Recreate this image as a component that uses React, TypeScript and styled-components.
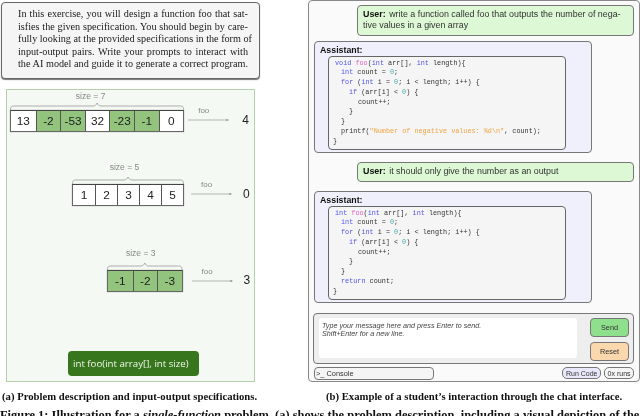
import React from 'react';
import styled, { createGlobalStyle } from 'styled-components';

const GlobalStyle = createGlobalStyle`
  html, body {
    margin: 0;
    width: 640px;
    height: 416px;
    overflow: hidden;
    background: #fff;
  }
  * {
    box-sizing: border-box;
  }
`;

const serif = `'Liberation Serif', serif`;
const sans = `'Liberation Sans', sans-serif`;
const mono = `'Liberation Mono', monospace`;

const Page = styled.div`
  width: 640px;
  height: 416px;
  overflow: hidden;
  filter: blur(0.3px);
`;

const Columns = styled.div`
  display: flex;
  align-items: flex-start;
`;

const LeftColumn = styled.div`
  display: flex;
  flex-direction: column;
  flex-shrink: 0;
  margin-top: 2px;
  margin-left: 1px;
  width: 259px;
`;

const RightColumn = styled.div`
  display: flex;
  flex-direction: column;
  flex-shrink: 0;
  margin-left: 48px;
  width: 332px;
`;

const Intro = styled.div`
  border: 1px solid #666;
  border-radius: 4px;
  box-shadow: 0 1px 1px #777;
  background: #f5f5f5;
  padding: 5px 11px 0 16px;
  height: 77px;
  line-height: 12.5px;
  color: #1a1a1a;
  font-family: ${serif};
  font-size: 10.2px;
`;

const IntroLine = styled.div`
  text-align: justify;
  text-align-last: justify;
  white-space: nowrap;
`;

const Panel = styled.div`
  display: flex;
  flex-direction: column;
  margin-top: 10px;
  margin-left: 5px;
  border: 1px solid #b3d0aa;
  background: #f4f9f3;
  width: 249px;
  height: 293px;
`;

const Row = styled.div<{ $left: number; $top: number }>`
  display: flex;
  align-items: flex-end;
  margin-top: ${(p) => p.$top}px;
  margin-left: ${(p) => p.$left}px;
`;

const ArrayBlock = styled.div`
  display: flex;
  flex-direction: column;
  align-items: center;
  flex-shrink: 0;
`;

const SizeLabel = styled.div<{ $gap: number; $shift: number }>`
  margin-right: ${(p) => p.$shift}px;
  margin-bottom: ${(p) => p.$gap}px;
  line-height: 10px;
  color: #888;
  font-family: ${sans};
  font-size: 8.5px;
`;

const Brace = styled.svg`
  display: block;
  height: 7px;
`;

const Cells = styled.div`
  display: flex;
  border: 1px solid #666;
  border-top-color: #444;
  box-shadow: 0 0 1px #999;
  background: #fff;
`;

const Cell = styled.div<{ $width: number; $green?: boolean }>`
  display: flex;
  align-items: center;
  justify-content: center;
  border-left: 1px solid #555;
  background: ${(p) => (p.$green ? '#93c47d' : '#fff')};
  width: ${(p) => p.$width}px;
  height: 20px;
  color: #222;
  font-family: ${sans};
  font-size: 11.8px;

  &:first-child {
    border-left: 0;
  }
`;

const Mapping = styled.div<{ $gap: number; $bottom: number }>`
  display: flex;
  flex-direction: column;
  flex-shrink: 0;
  margin-bottom: ${(p) => p.$bottom}px;
  margin-left: ${(p) => p.$gap}px;
  width: 41px;
`;

const FooLabel = styled.div`
  padding-left: 10px;
  line-height: 9px;
  color: #888;
  font-family: ${sans};
  font-size: 8px;
`;

const Arrow = styled.svg`
  display: block;
  margin-top: 3px;
`;

const Result = styled.div<{ $bottom: number; $gap: number }>`
  margin-bottom: ${(p) => p.$bottom}px;
  margin-left: ${(p) => p.$gap}px;
  line-height: 13px;
  color: #222;
  font-family: ${sans};
  font-size: 12px;
`;

const Signature = styled.div`
  display: flex;
  align-items: center;
  margin-top: 59px;
  margin-left: 61px;
  border-radius: 4px;
  background: #38761d;
  padding-left: 5px;
  width: 131px;
  height: 25px;
  white-space: nowrap;
  color: #f2f7ee;
  font-family: 'Open Sans', sans-serif;
  font-size: 9.7px;
`;

const Caption = styled.div<{ $left: number; $top: number }>`
  margin-top: ${(p) => p.$top}px;
  margin-left: ${(p) => p.$left}px;
  line-height: 12px;
  white-space: nowrap;
  color: #111;
  font-family: ${serif};
  font-size: 10.7px;
  font-weight: bold;
`;

const FigureLine = styled.div`
  margin-top: 7px;
  line-height: 12px;
  white-space: nowrap;
  color: #111;
  font-family: ${serif};
  font-size: 12.45px;
  font-weight: bold;

  & i {
    font-style: italic;
  }
`;

const ChatWindow = styled.div`
  display: flex;
  flex-direction: column;
  border: 1px solid #888;
  border-radius: 4px;
  background: #fafafa;
  padding: 4px 4px 1px 5px;
  height: 382px;
`;

const UserBubble = styled.div<{ $height: number; $top: number }>`
  flex-shrink: 0;
  margin-top: ${(p) => p.$top}px;
  margin-left: 43px;
  border: 1px solid #777;
  border-radius: 4px;
  background: #dcf8d4;
  padding: 3px 5px;
  width: 277px;
  height: ${(p) => p.$height}px;
  line-height: 11px;
  white-space: pre;
  color: #333;
  font-family: ${sans};
  font-size: 8.9px;
`;

const Speaker = styled.b`
  margin-right: 1px;
  color: #111;
`;

const AssistantBox = styled.div<{ $top: number }>`
  flex-shrink: 0;
  margin-top: ${(p) => p.$top}px;
  border: 1px solid #777;
  border-radius: 4px;
  background: #f0f0fd;
  padding: 2.5px 5px;
  width: 278px;
  height: 112px;
`;

const AssistantName = styled.div`
  line-height: 11px;
  color: #111;
  font-family: ${sans};
  font-size: 8.8px;
  font-weight: bold;
`;

const CodeBox = styled.div`
  margin-left: 8px;
  border: 1px solid #666;
  border-radius: 4px;
  background: #f5f5f5;
  padding: 2px 0 0 6px;
  width: 238px;
  height: 94px;
  font-family: ${mono};
  font-size: 6.8px;
`;

const CodeLine = styled.div<{ $indent: number }>`
  margin-left: ${(p) => p.$indent}px;
  line-height: 9.75px;
  white-space: pre;
  color: #333;
`;

const Kw = styled.span`
  color: #5555ee;
`;

const Fn = styled.span`
  color: #e066c0;
`;

const Num = styled.span`
  color: #44aaaa;
`;

const Str = styled.span`
  color: #f0a545;
`;

const InputPanel = styled.div`
  display: flex;
  flex-shrink: 0;
  margin-top: 10px;
  margin-left: -1px;
  border: 1px solid #777;
  border-radius: 4px;
  background: #eeeeee;
  padding: 4px 4px 0 5px;
  width: 321px;
  height: 51px;
`;

const MessageBox = styled.div`
  border-radius: 3px;
  background: #fff;
  padding: 4px 3px;
  width: 260px;
  height: 40px;
  line-height: 8px;
  color: #444;
  font-family: ${sans};
  font-size: 7.2px;
  font-style: italic;
`;

const Buttons = styled.div`
  display: flex;
  flex-direction: column;
  gap: 5px;
  margin-left: 13px;
`;

const ActionButton = styled.div<{ $color: string; $height: number }>`
  display: flex;
  align-items: center;
  justify-content: center;
  border: 1px solid #777;
  border-radius: 4px;
  background: ${(p) => p.$color};
  width: 39px;
  height: ${(p) => p.$height}px;
  color: #333;
  font-family: ${sans};
  font-size: 7.3px;
`;

const ConsoleBar = styled.div`
  display: flex;
  flex-shrink: 0;
  align-items: flex-start;
  margin-top: 3px;
  margin-left: -1px;
  width: 321px;
`;

const ConsoleField = styled.div`
  display: flex;
  align-items: center;
  margin-left: 1px;
  border: 1px solid #777;
  border-radius: 4px;
  background: #f5f5f5;
  padding-left: 1px;
  width: 121px;
  height: 13px;
  color: #333;
  font-family: ${sans};
  font-size: 7.4px;
`;

const Pill = styled.div<{ $width: number; $left: number; $blue?: boolean }>`
  display: flex;
  align-items: center;
  justify-content: center;
  margin-left: ${(p) => p.$left}px;
  border: 1px solid #777;
  border-radius: 5px;
  background: ${(p) => (p.$blue ? '#e8e8fa' : '#f5f5f5')};
  width: ${(p) => p.$width}px;
  height: 12px;
  color: #333;
  font-family: ${sans};
  font-size: 7px;
`;

type Example = {
  left: number;
  top: number;
  size: number;
  labelGap: number;
  labelShift: number;
  cellWidth: number;
  cells: { value: number; green: boolean }[];
  arrowGap: number;
  arrowBottom: number;
  resultGap: number;
  result: number;
};

const examples: Example[] = [
  {
    left: 3,
    top: 1,
    size: 7,
    labelGap: 2,
    labelShift: 13,
    cellWidth: 24.6,
    cells: [
      { value: 13, green: false },
      { value: -2, green: true },
      { value: -53, green: true },
      { value: 32, green: false },
      { value: -23, green: true },
      { value: -1, green: true },
      { value: 0, green: false },
    ],
    arrowGap: 4,
    arrowBottom: 10,
    resultGap: 13,
    result: 4,
  },
  {
    left: 65,
    top: 30,
    size: 5,
    labelGap: 5,
    labelShift: 7,
    cellWidth: 22,
    cells: [1, 2, 3, 4, 5].map((value) => ({ value, green: false })),
    arrowGap: 7,
    arrowBottom: 10,
    resultGap: 11,
    result: 0,
  },
  {
    left: 100,
    top: 42,
    size: 3,
    labelGap: 5,
    labelShift: 8,
    cellWidth: 24.5,
    cells: [-1, -2, -3].map((value) => ({ value, green: true })),
    arrowGap: 9,
    arrowBottom: 9,
    resultGap: 11,
    result: 3,
  },
];

function ExampleRow({ example }: { example: Example }) {
  const width = example.cellWidth * example.cells.length + 2;
  const mid = width / 2;
  return (
    <Row $left={example.left} $top={example.top}>
      <ArrayBlock>
        <SizeLabel $gap={example.labelGap} $shift={example.labelShift}>
          size = {example.size}
        </SizeLabel>
        <Brace viewBox={`0 0 ${width} 7`} width={width}>
          <path
            d={`M0.5 7C0.5 3 2 3 5 3H${mid - 4}C${mid - 2} 3 ${mid - 1} 2 ${mid} 0C${mid + 1} 2 ${mid + 2} 3 ${mid + 4} 3H${width - 5}C${width - 2} 3 ${width - 0.5} 3 ${width - 0.5} 7`}
            fill='none'
            stroke='#999'
            strokeWidth='0.8'
          />
        </Brace>
        <Cells>
          {example.cells.map((cell, i) => (
            <Cell key={i} $width={example.cellWidth} $green={cell.green}>
              {cell.value}
            </Cell>
          ))}
        </Cells>
      </ArrayBlock>
      <Mapping $gap={example.arrowGap} $bottom={example.arrowBottom}>
        <FooLabel>foo</FooLabel>
        <Arrow viewBox='0 0 41 4' width='41' height='4'>
          <path d='M0 2H39' stroke='#999' strokeWidth='0.7' />
          <path d='M38.5 1L41 2L38.5 3Z' fill='#777' />
        </Arrow>
      </Mapping>
      <Result $gap={example.resultGap} $bottom={5}>
        {example.result}
      </Result>
    </Row>
  );
}

function FirstCode() {
  return (
    <CodeBox>
      <CodeLine $indent={0}>
        <Kw>void</Kw> <Fn>foo</Fn>(<Kw>int</Kw> arr[], <Kw>int</Kw> length){'{'}
      </CodeLine>
      <CodeLine $indent={6}>
        <Kw>int</Kw> count = <Num>0</Num>;
      </CodeLine>
      <CodeLine $indent={6}>
        <Kw>for</Kw> (<Kw>int</Kw> i = <Num>0</Num>; i {'<'} length; i++) {'{'}
      </CodeLine>
      <CodeLine $indent={14}>
        <Kw>if</Kw> (arr[i] {'<'} <Num>0</Num>) {'{'}
      </CodeLine>
      <CodeLine $indent={23}>count++;</CodeLine>
      <CodeLine $indent={14}>{'}'}</CodeLine>
      <CodeLine $indent={6}>{'}'}</CodeLine>
      <CodeLine $indent={6}>
        printf(<Str>"Number of negative values: %d\n"</Str>, count);
      </CodeLine>
      <CodeLine $indent={-2}>{'}'}</CodeLine>
    </CodeBox>
  );
}

function SecondCode() {
  return (
    <CodeBox>
      <CodeLine $indent={0}>
        <Kw>int</Kw> <Fn>foo</Fn>(<Kw>int</Kw> arr[], <Kw>int</Kw> length){'{'}
      </CodeLine>
      <CodeLine $indent={6}>
        <Kw>int</Kw> count = <Num>0</Num>;
      </CodeLine>
      <CodeLine $indent={6}>
        <Kw>for</Kw> (<Kw>int</Kw> i = <Num>0</Num>; i {'<'} length; i++) {'{'}
      </CodeLine>
      <CodeLine $indent={14}>
        <Kw>if</Kw> (arr[i] {'<'} <Num>0</Num>) {'{'}
      </CodeLine>
      <CodeLine $indent={23}>count++;</CodeLine>
      <CodeLine $indent={14}>{'}'}</CodeLine>
      <CodeLine $indent={6}>{'}'}</CodeLine>
      <CodeLine $indent={6}>
        <Kw>return</Kw> count;
      </CodeLine>
      <CodeLine $indent={-2}>{'}'}</CodeLine>
    </CodeBox>
  );
}

export default function App() {
  return (
    <Page>
      <GlobalStyle />
      <Columns>
        <LeftColumn>
          <Intro>
            <IntroLine>In this exercise, you will design a function foo that sat-</IntroLine>
            <IntroLine>isfies the given specification. You should begin by care-</IntroLine>
            <IntroLine>fully looking at the provided specifications in the form of</IntroLine>
            <IntroLine>input-output pairs. Write your prompts to interact with</IntroLine>
            <IntroLine>the AI model and guide it to generate a correct program.</IntroLine>
          </Intro>
          <Panel>
            {examples.map((example) => (
              <ExampleRow key={example.size} example={example} />
            ))}
            <Signature>int foo(int array[], int size)</Signature>
          </Panel>
          <Caption $left={1} $top={8}>
            (a) Problem description and input-output specifications.
          </Caption>
        </LeftColumn>
        <RightColumn>
          <ChatWindow>
            <UserBubble $top={0} $height={31}>
              <Speaker>User:</Speaker> write a function called foo that outputs the number of nega-
              {'\n'}tive values in a given array
            </UserBubble>
            <AssistantBox $top={5}>
              <AssistantName>Assistant:</AssistantName>
              <FirstCode />
            </AssistantBox>
            <UserBubble $top={9} $height={20}>
              <Speaker>User:</Speaker> it should only give the number as an output
            </UserBubble>
            <AssistantBox $top={9}>
              <AssistantName>Assistant:</AssistantName>
              <SecondCode />
            </AssistantBox>
            <InputPanel>
              <MessageBox>
                Type your message here and press Enter to send.
                <br />
                Shift+Enter for a new line.
              </MessageBox>
              <Buttons>
                <ActionButton $color='#8fe08c' $height={19}>
                  Send
                </ActionButton>
                <ActionButton $color='#fbd7ae' $height={19}>
                  Reset
                </ActionButton>
              </Buttons>
            </InputPanel>
            <ConsoleBar>
              <ConsoleField>&gt;_ Console</ConsoleField>
              <Pill $blue $left={128} $width={39}>
                Run Code
              </Pill>
              <Pill $left={3} $width={30}>
                0x runs
              </Pill>
            </ConsoleBar>
          </ChatWindow>
          <Caption $left={18} $top={8}>
            (b) Example of a student’s interaction through the chat interface.
          </Caption>
        </RightColumn>
      </Columns>
      <FigureLine>
        Figure 1: Illustration for a <i>single-function</i> problem. (a) shows the problem description, including a visual depiction of the
      </FigureLine>
    </Page>
  );
}
